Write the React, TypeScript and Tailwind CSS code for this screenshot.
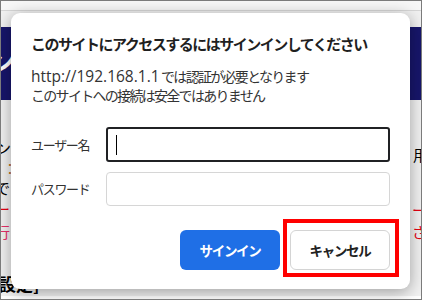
import React from "react";

const jp = "font-['Noto_Sans_CJK_JP','Noto_Sans',sans-serif]";

const BackgroundPage = () => {
  return (
    <div className="bg-[#f1f1f1]">
      <div className="h-[16px]" />
      <div className="flex h-[73px] items-center bg-[#17166b]">
        <span className="ml-[-12px] mt-[-6px] text-[26px] font-bold text-white">ン</span>
      </div>
      <div className="h-[38px]" />
      <div className="flex h-[20px] items-center justify-between text-[15px] text-black">
        <span className="ml-[-5px]">ン</span>
        <span className="mr-[-7px] mt-[14px]">用</span>
      </div>
      <div className="flex h-[20px] items-center text-[14px] text-[#b86b1c]">
        <span className="ml-[2px]">：</span>
      </div>
      <div className="flex h-[20px] items-center text-[15px] text-black">
        <span className="ml-[-6px]">で</span>
      </div>
      <div className="flex h-[22px] items-center justify-between text-[15px] text-[#e60012]">
        <span className="ml-[-6px]">ー</span>
        <span className="mr-[-6px] mt-[2px]">ー</span>
      </div>
      <div className="flex h-[25px] items-center justify-between text-[15px]">
        <span className="ml-[-6px] text-[#e8306a]">行</span>
        <span className="mr-[-6px] text-[#e60012]">さ</span>
      </div>
      <div className="h-[27px]" />
      <div className="flex h-[24px] items-center text-[17px] font-bold text-black">
        <span className="ml-[-2px]">設定]</span>
      </div>
    </div>
  );
};

const SignInDialog = () => {
  return (
    <div className="absolute left-[10px] top-[12px] flex w-[399px] flex-col rounded-[9px] bg-white pb-[19px] pl-[20px] pr-[20px] pt-[20px] shadow-[0_3px_16px_rgba(0,0,0,0.35)]">
      <h1 className="text-[15px] font-bold leading-[22px] tracking-[-1.5px] text-[#1f1f1f]">
        このサイトにアクセスするにはサインインしてください
      </h1>
      <div className="mt-[12px] text-[14px] leading-[19px] tracking-[-1.7px] text-[#333333]">
        <p>
          <span className="font-['Open_Sans',sans-serif] text-[15.5px] tracking-normal">http://192.168.1.1</span> では認証が必要となります
        </p>
        <p>このサイトへの接続は安全ではありません</p>
      </div>

      <div className="mt-[22px] flex flex-col gap-[10px]">
        <div className="flex items-center">
          <label className="w-[75px] text-[13px] tracking-[-1.3px] text-[#333333]">ユーザー名</label>
          <div className="flex h-[35px] w-[284px] items-center rounded-[3px] border-2 border-[#202124] px-[8px]">
            <span className="h-[20px] w-px bg-black" />
          </div>
        </div>
        <div className="flex items-center">
          <label className="w-[75px] text-[13px] tracking-[-1.3px] text-[#333333]">パスワード</label>
          <div className="h-[34px] w-[284px] rounded-[4px] border border-[#d6d6d6]" />
        </div>
      </div>

      <div className="mt-[24px] flex justify-end gap-[10px]">
        <button className="h-[40px] w-[100px] rounded-[6px] bg-[#1f6fe6] text-[13.5px] font-bold tracking-[-1.3px] text-white">
          サインイン
        </button>
        <button className="h-[40px] w-[100px] rounded-[6px] border border-[#d4d4d4] bg-white text-[13.5px] font-bold tracking-[-1.3px] text-[#222222]">
          キャンセル
        </button>
      </div>
    </div>
  );
};

export default function App() {
  return (
    <div className={`relative h-[300px] w-[422px] overflow-hidden border border-[#7b7b7b] bg-white ${jp}`}>
      <div className="h-[10px] border-b border-[#d6d6d6] bg-[#f7f7f7]" />
      <BackgroundPage />
      <SignInDialog />
      {/* red highlight over the cancel button */}
      <div className="absolute left-[282px] top-[218px] h-[58px] w-[116px] border-4 border-[#ff0000]" />
    </div>
  );
}
